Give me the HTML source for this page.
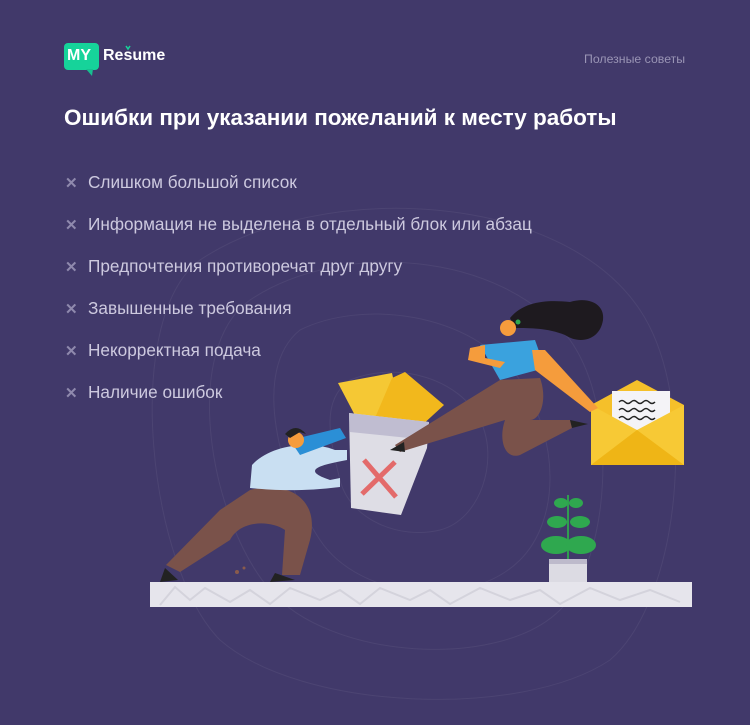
<!DOCTYPE html>
<html><head><meta charset="utf-8"><style>
body{margin:0;width:750px;height:725px;background:#41396a;font-family:"Liberation Sans",sans-serif;position:relative;overflow:hidden}
.a{position:absolute;white-space:nowrap}
.li{position:absolute;left:65px;font-size:17.2px;color:#cdc9df}
.li b{color:#8f89ad;font-weight:bold;display:inline-block;width:23px;font-size:15px}
</style></head><body>
<svg class="a" style="left:0;top:0" width="750" height="725">
<g fill="none" stroke="rgba(255,255,255,0.06)" stroke-width="1">
<path d="M300 330 C360 300 470 310 520 380 C560 440 560 520 520 560 C470 610 360 600 320 540 C280 480 250 370 300 330Z"/>
<path d="M250 300 C340 240 500 250 570 340 C620 410 610 560 560 610 C500 670 330 660 270 590 C210 520 180 350 250 300Z"/>
<path d="M200 260 C320 180 560 190 640 310 C700 400 680 600 610 660 C520 720 300 710 220 640 C150 570 120 320 200 260Z"/>
<path d="M350 380 C400 360 460 380 480 420 C500 460 480 520 440 530 C400 540 350 520 340 480 C330 440 320 400 350 380Z"/>
</g>
<rect x="64" y="43" width="35" height="27" rx="4" fill="#16d39a"/>
<path d="M86 69 L92 76 L93 69Z" fill="#16c090"/>
<path d="M126 46 L128 49 L130 46" stroke="#16d39a" stroke-width="1.5" fill="none"/>
<rect x="150" y="582" width="542" height="25" fill="#e6e5ec"/>
<g stroke="#d4d3dc" stroke-width="2" fill="none"><path d="M160 605 L175 587 L190 600 L205 588 L230 602 L250 590 L270 604 L290 588 L320 600 L340 590 L360 604 L380 588 L410 600 L430 590 L450 604 L480 588 L510 600 L540 590 L560 604 L590 588 L620 600 L650 590 L680 602"/></g>
<rect x="549" y="559" width="38" height="23" fill="#dcdbe3"/><rect x="549" y="559" width="38" height="5" fill="#bdbacb"/>
<path d="M568 559 L568 495" stroke="#2f9e4f" stroke-width="2"/>
<g fill="#2fa84f"><ellipse cx="556" cy="545" rx="15" ry="9"/><ellipse cx="581" cy="545" rx="15" ry="9"/><ellipse cx="557" cy="522" rx="10" ry="6"/><ellipse cx="580" cy="522" rx="10" ry="6"/><ellipse cx="561" cy="503" rx="7" ry="5"/><ellipse cx="576" cy="503" rx="7" ry="5"/></g>
<path d="M591 405 L637 380 L684 405 L684 465 L591 465Z" fill="#f5c02a"/>
<rect x="612" y="391" width="58" height="40" fill="#f4f3f7"/>
<g stroke="#222" stroke-width="1.5" fill="none"><path d="M619 402 q3 -3 6 0 t6 0 t6 0 t6 0 t6 0 t6 0"/><path d="M619 410 q3 -3 6 0 t6 0 t6 0 t6 0 t6 0 t6 0"/><path d="M619 418 q3 -3 6 0 t6 0 t6 0 t6 0 t6 0 t6 0"/></g>
<path d="M591 405 L637 430 L684 405 L684 465 L591 465Z" fill="#f7c935"/>
<path d="M591 465 L637 430 L684 465Z" fill="#efb516"/>
<path d="M338 383 L392 373 L400 410 L360 425Z" fill="#f5c834"/>
<path d="M392 378 L405 372 L444 405 L420 427 L372 425Z" fill="#f2b81c"/>
<path d="M349 413 L429 422 L427 448 L401 515 L351 508Z" fill="#dedde5"/>
<path d="M349 413 L429 422 L428 440 L350 432Z" fill="#c0bdd1"/>
<path d="M364 460 L396 497 M395 462 L362 494" stroke="#e36a6a" stroke-width="5"/>
<path d="M250 490 C290 480 320 500 310 540 L300 575 L282 575 L285 530 C270 520 240 520 230 540 L180 572 L166 565 L220 510Z" fill="#7a524a"/>
<path d="M165 568 L178 580 L160 582Z M275 573 L295 580 L270 582Z" fill="#222"/>
<path d="M252 465 C270 445 310 440 335 450 L347 450 L347 460 C320 465 300 470 330 480 L340 478 L340 487 C300 492 270 490 250 488Z" fill="#c9dff2"/>
<path d="M290 440 L340 428 L346 438 L300 455Z" fill="#2b8fd6"/>
<circle cx="296" cy="440" r="8" fill="#f59c3c"/><path d="M285 434 Q296 422 306 434 L300 432 L290 438Z" fill="#222"/>
<circle cx="237" cy="572" r="2" fill="#8a5b4c"/><circle cx="244" cy="568" r="1.5" fill="#8a5b4c"/>
<path d="M510 318 C525 300 550 300 570 302 C590 296 605 305 603 320 C600 340 580 345 565 335 C548 328 530 328 515 328Z" fill="#1e1a1f"/>
<circle cx="508" cy="328" r="8" fill="#f59c3c"/><circle cx="518" cy="322" r="2.5" fill="#2fa84f"/>
<path d="M480 345 L535 340 L545 368 L500 380 Z" fill="#3aa2de"/>
<path d="M470 348 L485 345 L485 358 L505 362 L500 368 L468 360Z" fill="#f59c3c"/>
<path d="M532 350 L545 350 L598 408 L590 412 L535 370Z" fill="#f59c3c"/>
<path d="M500 380 L540 378 C548 400 540 420 530 420 L570 420 L572 428 L520 455 C505 460 498 440 505 420 L400 452 L395 445Z" fill="#7a524a"/>
<path d="M390 450 L404 442 L405 452Z M570 420 L588 424 L572 428Z" fill="#222"/>
</svg>
<div class="a" style="left:67px;top:47px;font-size:16px;font-weight:bold;color:#fff">MY</div>
<div class="a" style="left:103px;top:47px;font-size:16px;font-weight:bold;color:#fff">Resume</div>
<div class="a" style="left:584px;top:52px;font-size:12.3px;color:#9a95b5">Полезные советы</div>
<div class="a" style="left:64px;top:105px;font-size:22.5px;font-weight:bold;color:#fff">Ошибки при указании пожеланий к месту работы</div>
<div class="li" style="top:172px"><b>✕</b>Слишком большой список</div>
<div class="li" style="top:214px"><b>✕</b>Информация не выделена в отдельный блок или абзац</div>
<div class="li" style="top:256px"><b>✕</b>Предпочтения противоречат друг другу</div>
<div class="li" style="top:298px"><b>✕</b>Завышенные требования</div>
<div class="li" style="top:340px"><b>✕</b>Некорректная подача</div>
<div class="li" style="top:382px"><b>✕</b>Наличие ошибок</div>
</body></html>
